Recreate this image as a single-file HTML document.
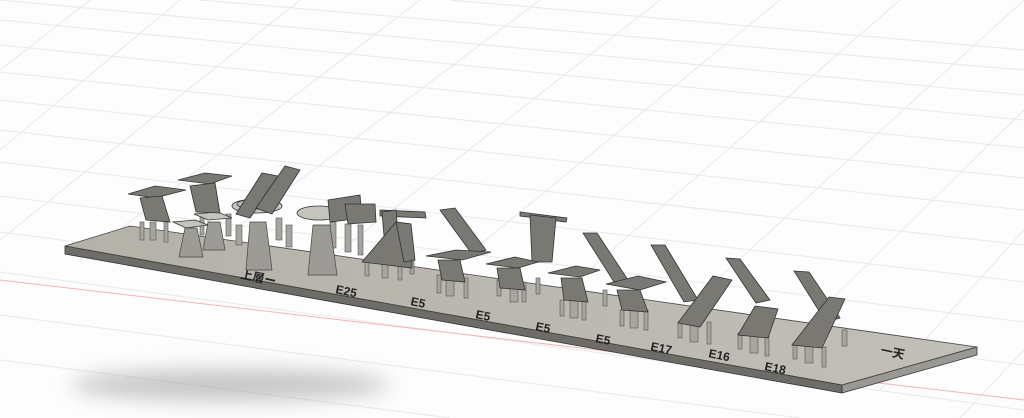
<!DOCTYPE html>
<html><head><meta charset="utf-8"><style>
html,body{margin:0;padding:0;background:#fff;width:1024px;height:418px;overflow:hidden;position:relative;}
svg{display:block;position:absolute;left:0;top:0;overflow:hidden;}
text{font-family:"Liberation Sans","Noto Sans CJK JP",sans-serif;font-weight:bold;fill:#222;}
</style></head><body>
<svg width="1024" height="418" viewBox="0 0 1024 418" xmlns="http://www.w3.org/2000/svg">
<defs>
<filter id="b" x="-30%" y="-100%" width="160%" height="300%"><feGaussianBlur stdDeviation="10"/></filter>
<linearGradient id="top" x1="0" y1="0" x2="1" y2="0"><stop offset="0" stop-color="#b4b1a9"/><stop offset="1" stop-color="#c2bfb8"/></linearGradient>
</defs>
<rect width="1024" height="418" fill="#fdfdfd"/>
<g stroke="#e8e8e8" stroke-width="1" fill="none">
<path d="M0 20 L1024 120 M0 45 L1024 148 M0 72 L1024 178 M0 100 L1024 210 M0 130 L1024 245 M0 162 L1024 282 M0 196 L1024 322 M0 232 L1024 365 M0 272 L1024 410 M0 315 L800 418 M0 360 L450 418 M0 0 L1024 95 M200 0 L1024 70 M450 0 L1024 50"/>
<path d="M0 240 L300 0 M80 260 L420 0 M180 270 L540 0 M290 290 L660 0 M400 310 L780 0 M520 330 L900 0 M640 350 L1024 0 M760 370 L1024 110 M880 390 L1024 230 M0 150 L180 0 M0 70 L90 0 M960 418 L1024 350"/>
</g>
<path d="M0 280 L1024 400" stroke="#f0b4b4" stroke-width="1"/>
<ellipse cx="230" cy="385" rx="160" ry="16" fill="#9a9a9a" opacity="0.55" filter="url(#b)"/>
<polygon points="65,246 130,226 977,347 842,385" fill="url(#top)"/>
<polygon points="65,246 842,385 842,393 65,254" fill="#6e6c66" stroke="#333" stroke-width="0.8"/>
<polygon points="842,385 977,347 977,355 842,393" fill="#9a9892" stroke="#333" stroke-width="0.8"/>
<polygon points="65,246 130,226 977,347 842,385" fill="none" stroke="#444" stroke-width="0.8"/>
<g font-size="12">
<text x="240" y="278" transform="rotate(12 240 278)">上層ー</text>
<text x="335" y="293" transform="rotate(12 335 293)">E25</text>
<text x="410" y="305" transform="rotate(12 410 305)">E5</text>
<text x="475" y="318" transform="rotate(12 475 318)">E5</text>
<text x="535" y="330" transform="rotate(12 535 330)">E5</text>
<text x="595" y="342" transform="rotate(12 595 342)">E5</text>
<text x="650" y="350" transform="rotate(12 650 350)">E17</text>
<text x="708" y="357" transform="rotate(12 708 357)">E16</text>
<text x="764" y="370" transform="rotate(12 764 370)">E18</text>
<text x="880" y="354" transform="rotate(12 880 354)">一天</text>
</g>
<g fill="#a7a59f" stroke="#555" stroke-width="0.6">
<rect x="140" y="222" width="4" height="18"/><rect x="150" y="222" width="6" height="18"/><rect x="164" y="222" width="4" height="20"/>
<rect x="200" y="215" width="4" height="20"/><rect x="226" y="214" width="5" height="22"/>
<rect x="236" y="225" width="6" height="20"/><rect x="276" y="218" width="6" height="22"/><rect x="286" y="225" width="6" height="22"/>
<rect x="330" y="222" width="6" height="26"/><rect x="345" y="224" width="6" height="28"/><rect x="358" y="225" width="5" height="30"/>
<rect x="365" y="262" width="4" height="14"/><rect x="382" y="262" width="6" height="16"/><rect x="398" y="262" width="4" height="18"/><rect x="410" y="258" width="4" height="16"/>
<rect x="437" y="275" width="4" height="18"/><rect x="446" y="278" width="8" height="18"/><rect x="464" y="278" width="4" height="20"/>
<rect x="497" y="280" width="4" height="16"/><rect x="510" y="284" width="8" height="18"/><rect x="522" y="282" width="4" height="20"/>
<rect x="536" y="278" width="4" height="16"/><rect x="560" y="300" width="4" height="16"/><rect x="570" y="300" width="8" height="18"/><rect x="582" y="300" width="4" height="20"/>
<rect x="603" y="290" width="4" height="16"/><rect x="620" y="310" width="4" height="16"/><rect x="630" y="310" width="8" height="18"/><rect x="644" y="310" width="4" height="20"/>
<rect x="678" y="322" width="4" height="16"/><rect x="690" y="324" width="8" height="18"/><rect x="707" y="322" width="4" height="22"/>
<rect x="738" y="333" width="4" height="16"/><rect x="750" y="335" width="8" height="18"/><rect x="765" y="336" width="4" height="20"/>
<rect x="793" y="343" width="4" height="16"/><rect x="805" y="345" width="8" height="18"/><rect x="822" y="347" width="4" height="20"/><rect x="842" y="330" width="5" height="16"/>
</g>
<g fill="#9d9b95" stroke="#444" stroke-width="0.7">
<polygon points="185,228 197,228 203,257 179,257"/><polygon points="208,222 220,222 225,250 203,250"/>
<polygon points="250,222 266,222 272,270 246,270"/><polygon points="313,225 330,225 337,275 308,275"/>
</g>
<g fill="#c5c3bd" stroke="#333" stroke-width="0.8">
<polygon points="173,222 195,220 208,225 186,228"/><polygon points="194,214 218,212 232,218 208,220"/>
<ellipse cx="257" cy="206" rx="25" ry="7"/><ellipse cx="257" cy="204" rx="20" ry="5" fill="#b9b7b0"/>
<ellipse cx="319" cy="213" rx="22" ry="7"/>
</g>
<g fill="#7a7872" stroke="#333" stroke-width="0.8">
<polygon points="128,194 155,186 186,190 155,198"/><polygon points="140,198 162,196 170,222 146,220"/>
<polygon points="178,180 205,173 232,176 210,184"/><polygon points="190,186 215,183 220,213 196,212"/>
<polygon points="236,214 262,173 278,176 250,218"/><polygon points="256,208 285,166 300,170 272,214"/>
<polygon points="328,200 360,195 362,218 330,222"/><polygon points="345,204 375,204 376,222 348,224"/>
<polygon points="380,210 425,212 426,218 380,216"/><polygon points="382,212 396,210 398,234 384,236"/>
<polygon points="362,262 396,222 411,224 412,268"/><polygon points="396,222 411,224 415,260 404,262"/>
<polygon points="440,210 455,208 486,250 472,254"/>
<polygon points="520,212 567,218 566,222 520,216"/><polygon points="530,215 556,218 552,262 532,262"/>
<polygon points="583,233 597,233 628,280 614,282"/>
<polygon points="651,245 665,245 698,300 684,302"/>
<polygon points="726,258 740,259 770,300 756,303"/>
<polygon points="794,271 809,272 840,318 826,322"/>
<polygon points="426,256 456,250 491,252 462,260"/><polygon points="438,260 460,260 465,282 442,280"/>
<polygon points="486,264 515,257 538,262 518,268"/><polygon points="497,268 520,268 525,290 500,288"/>
<polygon points="548,273 576,266 600,270 580,277"/><polygon points="561,278 582,278 588,302 564,300"/>
<polygon points="606,284 638,276 666,282 640,290"/><polygon points="617,290 640,290 648,312 622,310"/>
<polygon points="678,323 713,276 732,280 700,327"/>
<polygon points="738,335 755,306 778,309 768,338"/>
<polygon points="792,345 829,297 845,299 822,348"/>
</g>
</svg>
</body></html>
